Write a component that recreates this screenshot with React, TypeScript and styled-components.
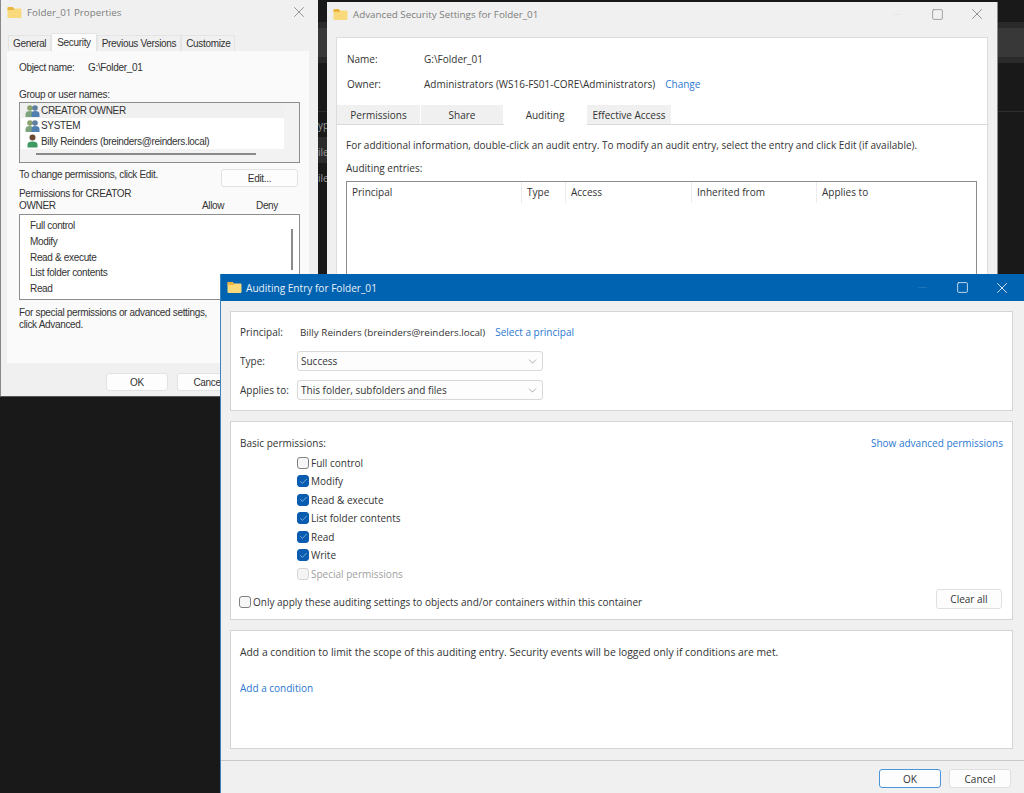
import styled, { createGlobalStyle } from 'styled-components';
import { Check, Square, X, Minus, ChevronDown } from 'lucide-react';

const GlobalStyle = createGlobalStyle`
  html, body {
    margin: 0;
    padding: 0;
    width: 1024px;
    height: 793px;
    overflow: hidden;
    background: #191919;
  }
  body {
    font-family: 'Open Sans', 'Noto Sans', sans-serif;
    color: #333;
  }
  * {
    box-sizing: border-box;
  }
`;

const checkedPermissions = ['Modify', 'Read & execute', 'List folder contents', 'Read', 'Write'];

function FolderIcon() {
  return (
    <svg width='15' height='13' viewBox='0 0 15 13'>
      <path d='M0.5 2 Q0.5 1 1.5 1 H5.5 L7 2.5 H13.5 Q14.5 2.5 14.5 3.5 V11 Q14.5 12 13.5 12 H1.5 Q0.5 12 0.5 11 Z' fill='#f8da7c' />
      <path d='M0.5 2 Q0.5 1 1.5 1 H5.5 L7 2.5 V4 H0.5 Z' fill='#eab53f' />
    </svg>
  );
}

function GroupIcon() {
  return (
    <svg width='15' height='14' viewBox='0 0 15 14'>
      <circle cx='5' cy='4' r='2.8' fill='#8aa36e' />
      <path d='M0.5 13 V10 Q0.5 7 5 7 Q8 7 8 10 V13 Z' fill='#7fa37f' />
      <circle cx='10' cy='4' r='2.8' fill='#5f7f9f' />
      <path d='M6.5 13 V10 Q6.5 7 10 7 Q14.5 7 14.5 10 V13 Z' fill='#4f7fb0' />
    </svg>
  );
}

function UserIcon() {
  return (
    <svg width='15' height='14' viewBox='0 0 15 14'>
      <circle cx='7.5' cy='3.6' r='3' fill='#6b4a32' />
      <path d='M2.5 13.5 V10.5 Q2.5 7.5 7.5 7.5 Q12.5 7.5 12.5 10.5 V13.5 Z' fill='#3f9a62' />
    </svg>
  );
}

export default function App() {
  return (
    <Desktop>
      <GlobalStyle />
      <BackdropBand $top={22} $height={6} $tone='#2a2a2a' />
      <BackdropBand $top={28} $height={29} $tone='#383838' />
      <BackdropBand $top={57} $height={6} $tone='#2a2a2a' />
      <BackdropBand $top={111} $height={1} $tone='#2e2e2e' />
      <BackdropBand $top={137} $height={26} $tone='#2b2b2b' $narrow />
      <BackdropFragment $top={118}>ypi</BackdropFragment>
      <BackdropFragment $top={145}>ile</BackdropFragment>
      <BackdropFragment $top={171}>ile</BackdropFragment>

      <PropertiesWindow>
        <TitleBar>
          <FolderIcon />
          <TitleText>Folder_01 Properties</TitleText>
          <TitleButtons>
            <TitleSlot $width={20}>
              <X size={18} strokeWidth={1.2} color='#8a8a8a' />
            </TitleSlot>
          </TitleButtons>
        </TitleBar>
        <ClassicTabs>
          <ClassicTab>General</ClassicTab>
          <ClassicTab $active>Security</ClassicTab>
          <ClassicTab>Previous Versions</ClassicTab>
          <ClassicTab>Customize</ClassicTab>
        </ClassicTabs>
        <ClassicPanel>
          <ObjectRow>
            <ObjectLabel>Object name:</ObjectLabel>
            <span>G:\Folder_01</span>
          </ObjectRow>
          <ClassicLabel>Group or user names:</ClassicLabel>
          <UserList>
            <UserRow $selected>
              <GroupIcon />
              CREATOR OWNER
            </UserRow>
            <UserRow>
              <GroupIcon />
              SYSTEM
            </UserRow>
            <UserRow>
              <UserIcon />
              Billy Reinders (breinders@reinders.local)
            </UserRow>
            <HorizontalThumb />
          </UserList>
          <EditRow>
            <span>To change permissions, click Edit.</span>
            <ClassicButton $width={77}>Edit...</ClassicButton>
          </EditRow>
          <PermissionHeader>
            <PermissionTitle>
              Permissions for CREATOR
              <br />
              OWNER
            </PermissionTitle>
            <PermissionColumn $width={54}>Allow</PermissionColumn>
            <PermissionColumn $width={40}>Deny</PermissionColumn>
          </PermissionHeader>
          <PermissionList>
            <span>Full control</span>
            <span>Modify</span>
            <span>Read &amp; execute</span>
            <span>List folder contents</span>
            <span>Read</span>
            <VerticalThumb />
          </PermissionList>
          <AdvancedNote>
            For special permissions or advanced settings,
            <br />
            click Advanced.
          </AdvancedNote>
        </ClassicPanel>
        <ClassicFooter>
          <ClassicButton $width={62}>OK</ClassicButton>
          <ClassicButton $width={62}>Cancel</ClassicButton>
        </ClassicFooter>
      </PropertiesWindow>

      <AdvancedWindow>
        <AdvancedTitleBar>
          <FolderIcon />
          <TitleText>Advanced Security Settings for Folder_01</TitleText>
          <TitleButtons>
            <TitleSlot $width={40}>
              <Minus size={13} strokeWidth={1} color='#e2e2e2' />
            </TitleSlot>
            <TitleSlot $width={40}>
              <Square size={13} strokeWidth={1.4} color='#8a8a8a' />
            </TitleSlot>
            <TitleSlot $width={40}>
              <X size={18} strokeWidth={1.2} color='#8a8a8a' />
            </TitleSlot>
          </TitleButtons>
        </AdvancedTitleBar>
        <AdvancedPanel>
          <InfoGrid>
            <span>Name:</span>
            <span>G:\Folder_01</span>
            <span>Owner:</span>
            <span>
              Administrators (WS16-FS01-CORE\Administrators)
              <InlineLink $gap={10}>Change</InlineLink>
            </span>
          </InfoGrid>
          <AdvancedTabs>
            <AdvancedTab $width={84}>Permissions</AdvancedTab>
            <AdvancedTab $width={83}>Share</AdvancedTab>
            <AdvancedTab $width={83} $active>Auditing</AdvancedTab>
            <AdvancedTab $width={85}>Effective Access</AdvancedTab>
          </AdvancedTabs>
          <AdvancedBody>
            <p>For additional information, double-click an audit entry. To modify an audit entry, select the entry and click Edit (if available).</p>
            <p>Auditing entries:</p>
            <EntriesTable>
              <EntriesHeader>
                <span>Principal</span>
                <span>Type</span>
                <span>Access</span>
                <span>Inherited from</span>
                <span>Applies to</span>
              </EntriesHeader>
            </EntriesTable>
          </AdvancedBody>
        </AdvancedPanel>
      </AdvancedWindow>

      <EntryWindow>
        <BlueTitleBar>
          <FolderIcon />
          <BlueTitleText>Auditing Entry for Folder_01</BlueTitleText>
          <BlueButtons>
            <TitleSlot $width={40}>
              <Minus size={13} strokeWidth={1} color='#3d83bf' />
            </TitleSlot>
            <TitleSlot $width={40}>
              <Square size={13} strokeWidth={1.5} color='#e8f0f7' />
            </TitleSlot>
            <TitleSlot $width={40}>
              <X size={18} strokeWidth={1.2} color='#e8f0f7' />
            </TitleSlot>
          </BlueButtons>
        </BlueTitleBar>
        <EntryBody>
          <PrincipalCard>
            <PrincipalRow>
              <FormLabel>Principal:</FormLabel>
              <PrincipalName>Billy Reinders (breinders@reinders.local)</PrincipalName>
              <InlineLink $gap={10}>Select a principal</InlineLink>
            </PrincipalRow>
            <FormRow>
              <FormLabel>Type:</FormLabel>
              <SelectBox>
                Success
                <ChevronDown size={13} strokeWidth={1} color='#666' />
              </SelectBox>
            </FormRow>
            <FormRow>
              <FormLabel>Applies to:</FormLabel>
              <SelectBox>
                This folder, subfolders and files
                <ChevronDown size={13} strokeWidth={1} color='#666' />
              </SelectBox>
            </FormRow>
          </PrincipalCard>
          <PermissionsCard>
            <PermissionsTop>
              <span>Basic permissions:</span>
              <LinkText>Show advanced permissions</LinkText>
            </PermissionsTop>
            <CheckColumn>
              <CheckRow>
                <CheckBox />
                Full control
              </CheckRow>
              {checkedPermissions.map((name) => (
                <CheckRow key={name}>
                  <CheckBox $checked>
                    <Check size={9} strokeWidth={2} color='#9cc4e8' />
                  </CheckBox>
                  {name}
                </CheckRow>
              ))}
              <CheckRow $disabled>
                <CheckBox $disabled />
                Special permissions
              </CheckRow>
            </CheckColumn>
            <ScopeRow>
              <ScopeCheck>
                <CheckBox />
                Only apply these auditing settings to objects and/or containers within this container
              </ScopeCheck>
              <ModernButton $width={66} $height={20}>Clear all</ModernButton>
            </ScopeRow>
          </PermissionsCard>
          <ConditionCard>
            <ConditionText>Add a condition to limit the scope of this auditing entry. Security events will be logged only if conditions are met.</ConditionText>
            <LinkText>Add a condition</LinkText>
          </ConditionCard>
        </EntryBody>
        <EntryFooter>
          <ModernButton $width={62} $primary>OK</ModernButton>
          <ModernButton $width={62}>Cancel</ModernButton>
        </EntryFooter>
      </EntryWindow>
    </Desktop>
  );
}

const Desktop = styled.div`
  position: relative;
  width: 1024px;
  height: 793px;
  overflow: hidden;
  background: #191919;
  font-size: 10px;
`;

const BackdropBand = styled.div<{ $top: number; $height: number; $tone: string; $narrow?: boolean }>`
  position: absolute;
  top: ${(p) => p.$top}px;
  left: 318px;
  right: ${(p) => (p.$narrow ? '697px' : '0')};
  height: ${(p) => p.$height}px;
  background: ${(p) => p.$tone};
`;

const BackdropFragment = styled.span<{ $top: number }>`
  position: absolute;
  top: ${(p) => p.$top}px;
  left: 318px;
  color: #9a9a9a;
  line-height: 14px;
`;

const WindowFrame = styled.section`
  position: absolute;
  display: flex;
  flex-direction: column;
  background: #f0f0f0;
`;

const PropertiesWindow = styled(WindowFrame)`
  left: 0;
  top: 0;
  width: 318px;
  height: 397px;
  padding: 0 9px 0 6px;
  border-left: 1px solid #888;
  border-bottom: 1px solid #555;
  font-family: 'Liberation Sans', Arial, sans-serif;
  letter-spacing: -0.33px;
`;

const AdvancedWindow = styled(WindowFrame)`
  left: 327px;
  top: 2px;
  width: 671px;
  height: 300px;
  padding: 0 9px;
  border-right: 1px solid #8a8a8a;
`;

const EntryWindow = styled(WindowFrame)`
  left: 220px;
  top: 274px;
  width: 804px;
  height: 519px;
  border-left: 1px solid #3d83bf;
`;

const TitleBar = styled.header`
  display: flex;
  align-items: center;
  gap: 5px;
  height: 24px;
  flex: none;
`;

const AdvancedTitleBar = styled(TitleBar)`
  margin: 0 -9px 0 -3px;
`;

const TitleText = styled.span`
  color: #7d7d7d;
  font-family: 'Open Sans', sans-serif;
  font-size: 9.8px;
  letter-spacing: 0;
`;

const TitleButtons = styled.div`
  display: flex;
  align-items: center;
  margin-left: auto;
`;

const TitleSlot = styled.span<{ $width: number }>`
  display: flex;
  align-items: center;
  justify-content: center;
  width: ${(p) => p.$width}px;
`;

const ClassicTabs = styled.div`
  display: flex;
  align-items: flex-end;
  height: 27px;
  padding-left: 1px;
  flex: none;
`;

const ClassicTab = styled.div<{ $active?: boolean }>`
  display: flex;
  align-items: center;
  padding: 0 ${(p) => (p.$active ? 5 : 4)}px;
  height: ${(p) => (p.$active ? 18 : 16)}px;
  background: ${(p) => (p.$active ? '#fbfbfb' : '#f0f0f0')};
  border: 1px solid #e4e4e4;
  border-bottom: 0;
`;

const ClassicPanel = styled.div`
  display: flex;
  flex-direction: column;
  height: 312px;
  padding: 0 0 0 12px;
  background: #fafafa;
  flex: none;
`;

const ObjectRow = styled.div`
  display: flex;
  margin-top: 10px;
  line-height: 13px;
`;

const ObjectLabel = styled.span`
  width: 69px;
`;

const ClassicLabel = styled.div`
  margin-top: 14px;
  line-height: 13px;
`;

const UserList = styled.div`
  position: relative;
  width: 281px;
  height: 61px;
  margin-top: 1px;
  padding: 0 1px;
  border: 1px solid #8d8d8d;
  background: #f2f2f2;
`;

const UserRow = styled.div<{ $selected?: boolean }>`
  display: flex;
  align-items: center;
  gap: 1px;
  width: 263px;
  height: 15.3px;
  padding-left: 4px;
  background: ${(p) => (p.$selected ? '#f0f0f0' : '#ffffff')};
`;

const HorizontalThumb = styled.div`
  position: absolute;
  left: 16px;
  bottom: 7px;
  width: 220px;
  height: 2px;
  background: #8a8a8a;
`;

const EditRow = styled.div`
  display: flex;
  justify-content: space-between;
  align-items: flex-start;
  width: 279px;
  margin-top: 6px;
  line-height: 11px;
`;

const ClassicButton = styled.button<{ $width: number }>`
  width: ${(p) => p.$width}px;
  height: 18px;
  padding: 0;
  border: 1px solid #e2e2e2;
  border-radius: 3px;
  background: #fdfdfd;
  color: #333;
  font: inherit;
  letter-spacing: inherit;
`;

const PermissionHeader = styled.div`
  display: flex;
  align-items: flex-end;
  margin-top: 1px;
  line-height: 12px;
`;

const PermissionTitle = styled.div`
  width: 155px;
  margin-right: 28px;
`;

const PermissionColumn = styled.span<{ $width: number }>`
  width: ${(p) => p.$width}px;
`;

const PermissionList = styled.div`
  position: relative;
  display: flex;
  flex-direction: column;
  justify-content: space-between;
  width: 281px;
  height: 86px;
  margin-top: 2px;
  padding: 4px 10px;
  border: 1px solid #8d8d8d;
  background: #ffffff;
  line-height: 13px;
`;

const VerticalThumb = styled.div`
  position: absolute;
  top: 14px;
  right: 6px;
  width: 2px;
  height: 41px;
  background: #8a8a8a;
`;

const AdvancedNote = styled.div`
  margin-top: 7px;
  line-height: 12px;
`;

const ClassicFooter = styled.div`
  display: flex;
  gap: 9px;
  padding: 10px 0 0 99px;
`;

const AdvancedPanel = styled.div`
  display: flex;
  flex-direction: column;
  height: 280px;
  margin-top: 11px;
  border: 1px solid #dcdcdc;
  background: #ffffff;
`;

const InfoGrid = styled.div`
  display: grid;
  grid-template-columns: 77px 1fr;
  row-gap: 12px;
  padding: 15px 10px 0;
  line-height: 13px;
`;

const AdvancedTabs = styled.div`
  display: flex;
  height: 20px;
  margin-top: 14px;
  border-bottom: 1px solid #d9d9d9;
`;

const AdvancedTab = styled.div<{ $width: number; $active?: boolean }>`
  display: flex;
  align-items: center;
  justify-content: center;
  width: ${(p) => p.$width}px;
  height: ${(p) => (p.$active ? 20 : 19)}px;
  background: ${(p) => (p.$active ? '#ffffff' : '#f0f0f0')};
  border-right: 1px solid #fff;
`;

const AdvancedBody = styled.div`
  padding: 0 10px 0 9px;
  & p {
    margin: 0;
    line-height: 13px;
  }
  & p:first-child {
    margin-top: 14px;
  }
  & p:nth-child(2) {
    margin-top: 10px;
  }
`;

const EntriesTable = styled.div`
  height: 110px;
  margin-top: 6px;
  border: 1px solid #8d8d8d;
  background: #ffffff;
`;

const EntriesHeader = styled.div`
  display: grid;
  grid-template-columns: 175px 44px 126px 125px 1fr;
  height: 21px;
  & span {
    padding: 4px 0 0 5px;
    border-right: 1px solid #ececec;
    line-height: 13px;
  }
  & span:last-child {
    border-right: 0;
  }
`;

const BlueTitleBar = styled.header`
  display: flex;
  align-items: center;
  gap: 4px;
  height: 27px;
  padding: 0 2px 0 6px;
  background: #0063b1;
  flex: none;
`;

const BlueTitleText = styled.span`
  color: #e8f0f7;
  font-size: 10.1px;
`;

const BlueButtons = styled(TitleButtons)``;

const EntryBody = styled.div`
  display: flex;
  flex-direction: column;
  gap: 10px;
  padding: 10px 11px 0 9px;
`;

const Card = styled.div`
  display: flex;
  flex-direction: column;
  border: 1px solid #d4d4d4;
  background: #ffffff;
`;

const PrincipalCard = styled(Card)`
  height: 100px;
  padding: 13px 9px 0;
  gap: 9px;
`;

const FormRow = styled.div`
  display: flex;
  align-items: center;
  height: 20px;
`;

const PrincipalRow = styled(FormRow)`
  height: 13px;
  margin-bottom: 4px;
`;

const PrincipalName = styled.span`
  font-size: 9.85px;
`;

const FormLabel = styled.span`
  width: 60px;
`;

const SelectBox = styled.div`
  display: flex;
  align-items: center;
  justify-content: space-between;
  width: 246px;
  height: 20px;
  margin-left: -3px;
  padding: 0 3px;
  border: 1px solid #d8d8d8;
  border-radius: 3px;
  background: #fdfdfd;
`;

const PermissionsCard = styled(Card)`
  height: 199px;
  padding: 15px 10px 0 9px;
`;

const PermissionsTop = styled.div`
  display: flex;
  justify-content: space-between;
  margin-right: -1px;
  line-height: 13px;
`;

const CheckColumn = styled.div`
  display: flex;
  flex-direction: column;
  gap: 5.5px;
  margin: 6px 0 0 57px;
`;

const CheckRow = styled.label<{ $disabled?: boolean }>`
  display: flex;
  align-items: center;
  gap: 2px;
  height: 13px;
  color: ${(p) => (p.$disabled ? '#a0a0a0' : '#333')};
`;

const CheckBox = styled.span<{ $checked?: boolean; $disabled?: boolean }>`
  display: inline-flex;
  align-items: center;
  justify-content: center;
  width: 12px;
  height: 12px;
  border-radius: 3px;
  border: 1px solid ${(p) => (p.$checked ? '#0a5cb0' : p.$disabled ? '#d6d6d6' : '#808080')};
  background: ${(p) => (p.$checked ? '#0a5cb0' : p.$disabled ? '#f4f4f4' : '#f6f6f6')};
`;

const ScopeRow = styled.div`
  display: flex;
  align-items: flex-start;
  justify-content: space-between;
  margin: 9px 0 0 -1px;
`;

const ScopeCheck = styled(CheckRow)`
  margin-top: 6.5px;
`;

const ModernButton = styled.button<{ $width: number; $height?: number; $primary?: boolean }>`
  width: ${(p) => p.$width}px;
  height: ${(p) => p.$height ?? 19}px;
  padding: 0;
  border: ${(p) => (p.$primary ? '1px solid #4a94d8' : '1px solid #e0e0e0')};
  border-radius: 3px;
  background: #fdfdfd;
  color: #333;
  font: inherit;
`;

const ConditionCard = styled(Card)`
  height: 119px;
  padding: 15px 9px 0;
  gap: 23px;
  line-height: 13px;
`;

const ConditionText = styled.span`
  font-size: 10.35px;
`;

const EntryFooter = styled.footer`
  display: flex;
  justify-content: flex-end;
  gap: 8px;
  margin-top: 11px;
  padding: 8px 13px 0 0;
  border-top: 1px solid #c8c8c8;
`;

const LinkText = styled.span`
  color: #2a78d0;
`;

const InlineLink = styled(LinkText)<{ $gap: number }>`
  margin-left: ${(p) => p.$gap}px;
`;
